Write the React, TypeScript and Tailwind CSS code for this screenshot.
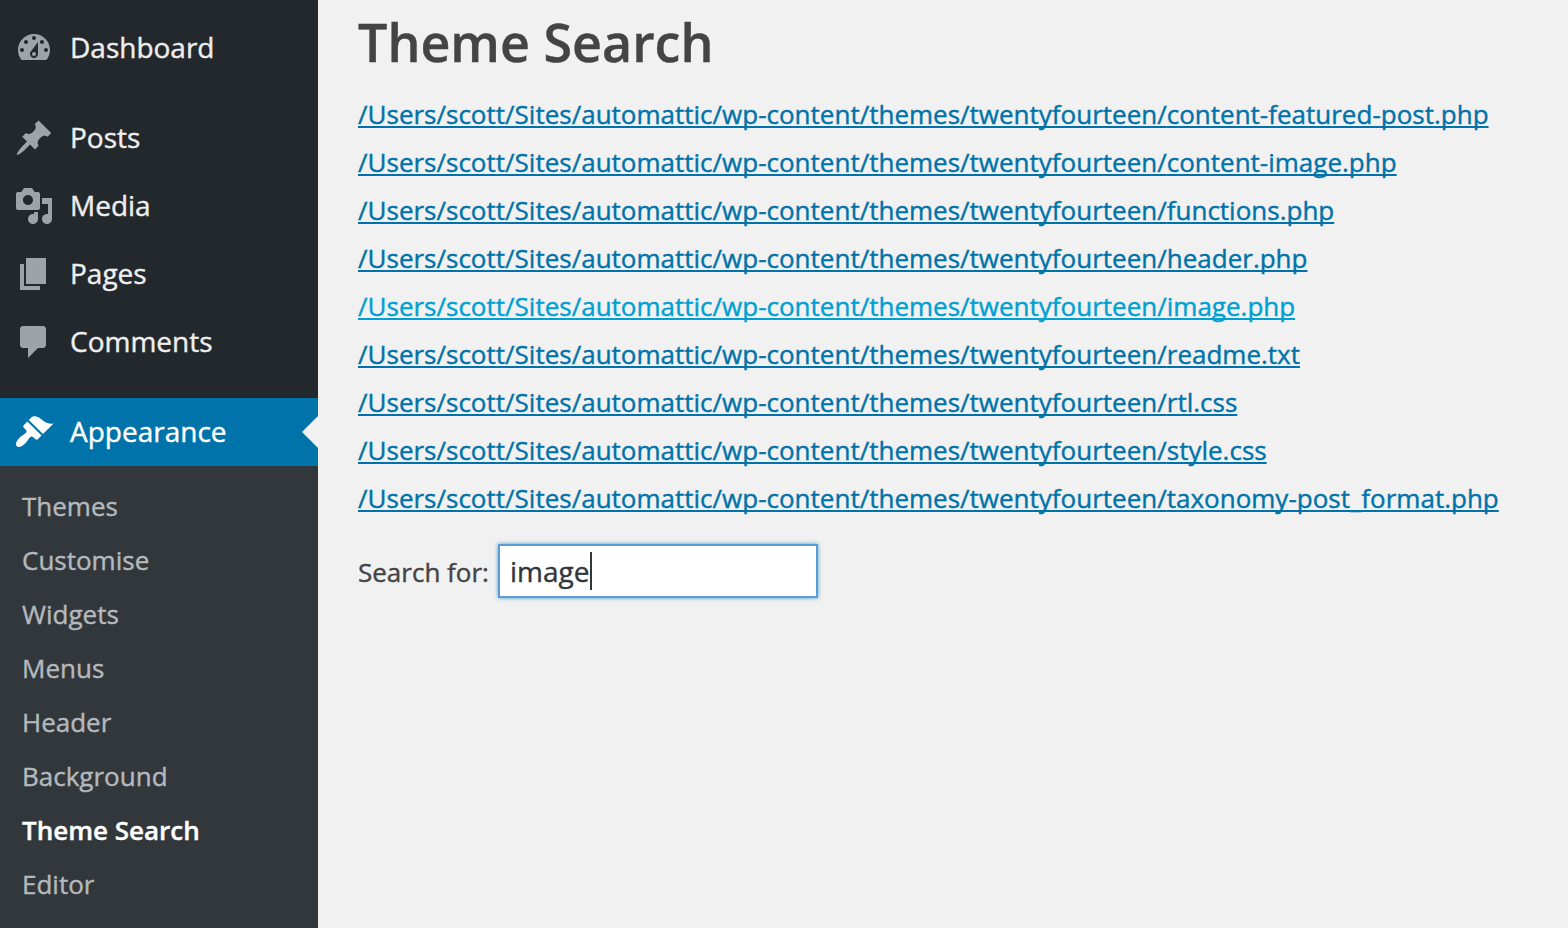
import React from "react";

const icons = {
  dashboard:
    "M3.76 16h12.48c1.1-1.37 1.76-3.11 1.76-5 0-4.42-3.58-8-8-8s-8 3.58-8 8c0 1.89.66 3.63 1.76 5zM10 4c.55 0 1 .45 1 1s-.45 1-1 1-1-.45-1-1 .45-1 1-1zM6 6c.55 0 1 .45 1 1s-.45 1-1 1-1-.45-1-1 .45-1 1-1zM14 6c.55 0 1 .45 1 1s-.45 1-1 1-1-.45-1-1 .45-1 1-1zM8.63 11.55L12 7v6c0 1.1-.9 2-2 2s-2-.9-2-2c0-.57.24-1.08.63-1.45zM4 10c.55 0 1 .45 1 1s-.45 1-1 1-1-.45-1-1 .45-1 1-1zM16 10c.55 0 1 .45 1 1s-.45 1-1 1-1-.45-1-1 .45-1 1-1zM10 12c.55 0 1 .45 1 1s-.45 1-1 1-1-.45-1-1 .45-1 1-1z",
  posts:
    "M10.44 3.02l1.82-1.82 6.36 6.35-1.83 1.82c-1.05-.68-2.48-.57-3.41.36l-.75.75c-.92.93-1.04 2.35-.35 3.41l-1.83 1.82-2.41-2.41-2.8 2.79c-.42.42-3.38 2.71-3.8 2.29s1.86-3.39 2.28-3.81l2.79-2.79L4.1 9.36l1.83-1.82c1.05.69 2.48.57 3.4-.36l.75-.75c.93-.92 1.05-2.35.36-3.41z",
  media:
    "M13 11V4c0-.55-.45-1-1-1h-1.67L9 1H5L3.67 3H2c-.55 0-1 .45-1 1v7c0 .55.45 1 1 1h10c.55 0 1-.45 1-1zM7 4.5c1.38 0 2.5 1.12 2.5 2.5S8.38 9.5 7 9.5 4.5 8.38 4.5 7 5.62 4.5 7 4.5zM14 6h5v10.5c0 1.38-1.12 2.5-2.5 2.5S14 17.88 14 16.5s1.12-2.5 2.5-2.5c.17 0 .34.02.5.05V9h-3V6zM10 14.05V13h2v3.5c0 1.38-1.12 2.5-2.5 2.5S7 17.88 7 16.5 8.12 14 9.5 14c.17 0 .34.02.5.05z",
  pages: "M6 15V2h10v13H6zM5 16h8v2H3V5h2v11z",
  comments:
    "M4.5 2h10c.83 0 1.5.67 1.5 1.5v8c0 .83-.67 1.5-1.5 1.5H12l-5 5v-5H4.5c-.83 0-1.5-.67-1.5-1.5v-8C3 2.67 3.67 2 4.5 2z",
  appearance:
    "M14.48 11.06L7.41 3.99l1.5-1.5c.5-.56 2.3-.47 3.51.32 1.21.8 1.43 1.28 2.91 2.1 1.18.64 2.45 1.26 4.45.85zM13.77 11.77L6.7 4.7 4.93 6.47c-.39.39-.39 1.02 0 1.41l1.06 1.06c.39.39.39 1.03 0 1.42-.6.6-1.43 1.11-2.21 1.69-.35.26-.7.53-1.01.84C1.43 14.23.4 16.08 1.4 17.07c.99 1 2.84-.03 4.18-1.36.31-.31.58-.66.85-1.02.57-.78 1.08-1.61 1.69-2.21.39-.39 1.02-.39 1.41 0l1.06 1.06c.39.39 1.02.39 1.41 0z",
};

function MenuItem({ icon, label, active = false }: { icon: keyof typeof icons; label: string; active?: boolean }) {
  return (
    <a
      className={
        active
          ? "relative flex h-[68px] items-center gap-4 bg-[#0073aa] pl-3.5 text-white"
          : "flex h-[68px] items-center gap-4 pl-3.5 text-[#eee]"
      }
    >
      <svg
        viewBox="0 0 20 20"
        fillRule="evenodd"
        className={active ? "size-10 shrink-0 fill-white" : "size-10 shrink-0 fill-[#9ea3a8]"}
      >
        <path d={icons[icon]} />
      </svg>
      <span className="pb-0.5 text-[28px] leading-9">{label}</span>
      {active && (
        <svg viewBox="0 0 16 32" className="absolute top-[18px] right-0 h-8 w-4 fill-[#f1f1f1]">
          <path d="M16 0v32L0 16z" />
        </svg>
      )}
    </a>
  );
}

const submenu = ["Themes", "Customise", "Widgets", "Menus", "Header", "Background", "Theme Search", "Editor"];

const files = [
  "content-featured-post.php",
  "content-image.php",
  "functions.php",
  "header.php",
  "image.php",
  "readme.txt",
  "rtl.css",
  "style.css",
  "taxonomy-post_format.php",
];

export default function App() {
  return (
    <div className="flex h-[928px] w-[1568px] overflow-hidden bg-[#f1f1f1] font-['Open_Sans',sans-serif] text-[26px] text-[#444] [-webkit-text-stroke:0.4px]">
      <nav className="flex w-[318px] shrink-0 flex-col bg-[#23282d] pt-3.5">
        <MenuItem icon="dashboard" label="Dashboard" />
        <div className="mt-[22px]">
          <MenuItem icon="posts" label="Posts" />
          <MenuItem icon="media" label="Media" />
          <MenuItem icon="pages" label="Pages" />
          <MenuItem icon="comments" label="Comments" />
        </div>
        <div className="mt-[22px]">
          <MenuItem icon="appearance" label="Appearance" active />
        </div>
        <ul className="flex-1 bg-[#32373c] pt-[13px] pl-[22px]">
          {submenu.map((s) => (
            <li
              key={s}
              className={
                s === "Theme Search"
                  ? "h-[54px] leading-[54px] font-semibold text-white"
                  : "h-[54px] leading-[54px] text-[#b4b9be]"
              }
            >
              {s}
            </li>
          ))}
        </ul>
      </nav>
      <main className="flex-1 pl-10">
        <h1 className="h-[90px] pt-[7px] text-[52px] leading-[70px] font-semibold">Theme Search</h1>
        <ul>
          {files.map((f) => (
            <li key={f} className="h-12 leading-[48px] whitespace-nowrap">
              <a
                className={
                  f === "image.php"
                    ? "text-[#00a0d2] underline decoration-2 underline-offset-2 [-webkit-text-stroke:0.4px] [text-decoration-skip-ink:none]"
                    : "text-[#0073aa] underline decoration-2 underline-offset-2 [-webkit-text-stroke:0.4px] [text-decoration-skip-ink:none]"
                }
              >
                /Users/scott/Sites/automattic/wp-content/themes/twentyfourteen/{f}
              </a>
            </li>
          ))}
        </ul>
        <div className="mt-[22px] flex items-center">
          <label className="w-[140px] pt-0.5 whitespace-nowrap">Search for:</label>
          <div className="flex h-[54px] w-80 items-center border-2 border-[#5b9dd9] bg-white pl-2.5 text-[28px] text-[#32373c] shadow-[0_0_4px_rgba(30,140,190,0.8)]">
            <span>image</span>
            <span className="ml-px h-[38px] w-0.5 bg-[#32373c]" />
          </div>
        </div>
      </main>
    </div>
  );
}
